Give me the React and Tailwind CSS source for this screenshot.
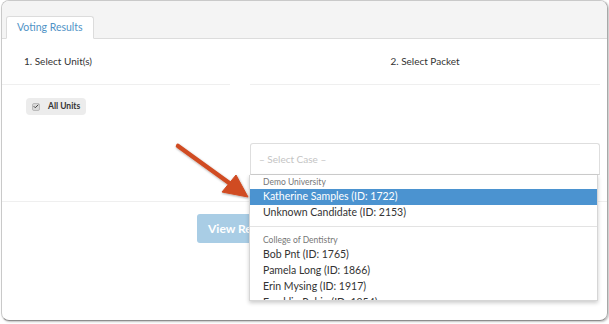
import { Check } from 'lucide-react'

const groups = [
  {
    label: 'Demo University',
    items: [
      { name: 'Katherine Samples (ID: 1722)', active: true },
      { name: 'Unknown Candidate (ID: 2153)' },
    ],
  },
  {
    label: 'College of Dentistry',
    items: [
      { name: 'Bob Pnt (ID: 1765)' },
      { name: 'Pamela Long (ID: 1866)' },
      { name: 'Erin Mysing (ID: 1917)' },
      { name: 'Franklin Rubin (ID: 1954)' },
    ],
  },
]

export default function App() {
  return (
    <div className="relative w-[609px] h-[324px] bg-white overflow-hidden font-['Lato',sans-serif]">
      {/* Window */}
      <div className="ml-[1px] w-[607px] h-[321px] rounded-[8px] border border-[#c9c9c9] border-b-[#8d8d8d] border-r-[#a8a8a8] shadow-[1px_1px_2px_rgba(0,0,0,0.25)] overflow-hidden flex flex-col">
        {/* Tab bar */}
        <div className="h-[38px] shrink-0 bg-[#f4f4f4] border-b border-[#dcdcdc] flex items-end pl-[4px]">
          <div className="h-[23px] -mb-px px-[10px] flex items-center bg-white border border-[#dcdcdc] border-b-white rounded-t-[3px] text-[10.5px] text-[#4f93c6]">
            Voting Results
          </div>
        </div>

        {/* Steps */}
        <div className="h-[162px] shrink-0 flex">
          <div className="w-[228px] shrink-0">
            <div className="h-[46px] border-b border-[#efefef] flex items-center pl-[22px] text-[10px] text-[#333]">
              1. Select Unit(s)
            </div>
            <div className="flex pl-[24px] pt-[13px]">
              <div className="flex items-center gap-[8px] h-[17px] px-[6px] rounded-[4px] bg-[#ececec]">
                <span className="w-[8px] h-[8px] rounded-[2px] bg-[#d9d9d9] border border-[#bbb] flex items-center justify-center">
                  <Check size={7} strokeWidth={4} className="text-[#444]" />
                </span>
                <span className="text-[8.5px] font-bold text-[#333]">All Units</span>
              </div>
            </div>
          </div>
          <div className="w-[20px] shrink-0" />
          <div className="w-[350px] shrink-0">
            <div className="h-[46px] border-b border-[#efefef] flex items-center justify-center text-[10px] text-[#333]">
              2. Select Packet
            </div>
            <div className="pt-[58px]">
              <div className="h-[32px] bg-white border border-[#dedede] border-b-[#cfcfcf] rounded-t-[3px] flex items-center pl-[8px] text-[10px] text-[#c4c4c4]">
                – Select Case –
              </div>
            </div>
          </div>
        </div>

        {/* Actions */}
        <div className="flex border-t border-[#efefef] pt-[12px] pl-[195px]">
          <div className="flex items-center h-[29px] px-[11px] rounded-[3px] bg-[#a9cde5] text-white text-[12px] font-bold">
            View Report
          </div>
        </div>
      </div>

      {/* Open dropdown */}
      <div className="absolute left-[249px] top-[175px] w-[349px] h-[126px] bg-white border border-[#d6d6d6] border-t-0 shadow-[0_2px_4px_rgba(0,0,0,0.2)] overflow-hidden">
        {groups.map((g, gi) => (
          <div key={g.label} className={gi > 0 ? 'border-t border-[#e3e3e3] mt-[5px] pt-[6px]' : ''}>
            <div className="h-[14px] flex items-center pl-[13px] text-[8.5px] text-[#777]">{g.label}</div>
            {g.items.map((it) => (
              <div
                key={it.name}
                className={`h-[16px] flex items-center pl-[13px] text-[10.5px] ${
                  it.active ? 'bg-[#4b93d0] text-white' : 'text-[#333]'
                }`}
              >
                {it.name}
              </div>
            ))}
          </div>
        ))}
      </div>

      {/* Annotation arrow */}
      <svg className="absolute left-[170px] top-[138px]" width="85" height="65" viewBox="0 0 85 65">
        <defs>
          <filter id="sh" x="-20%" y="-20%" width="140%" height="140%">
            <feDropShadow dx="0.5" dy="1" stdDeviation="0.8" floodColor="#000" floodOpacity="0.35" />
          </filter>
        </defs>
        <g filter="url(#sh)" fill="#d04b21" stroke="#d04b21">
          <line x1="8" y1="8" x2="62" y2="47" strokeWidth="4.5" strokeLinecap="round" />
          <polygon points="78,59 52,54 66,37" strokeWidth="1" strokeLinejoin="round" />
        </g>
      </svg>
    </div>
  )
}
